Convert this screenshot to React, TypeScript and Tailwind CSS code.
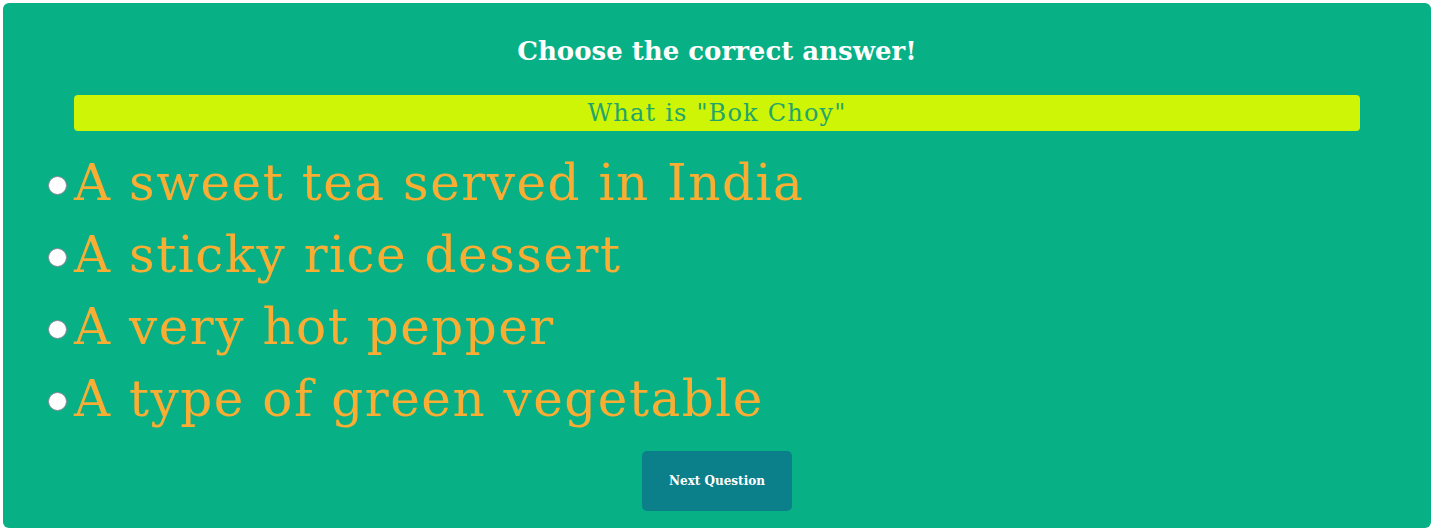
import React from "react";

const options = [
  "A sweet tea served in India",
  "A sticky rice dessert",
  "A very hot pepper",
  "A type of green vegetable",
];

export default function App() {
  return (
    <div className="w-[1434px] h-[532px] bg-white p-[3px]" style={{ fontFamily: '"DejaVu Serif", serif' }}>
      <div className="h-[525px] rounded-[6px] bg-[#08b086] flex flex-col">
        <h1 className="text-center text-white font-bold text-[26px] leading-[30px] mt-[33px] tracking-[0px]">
          Choose the correct answer!
        </h1>
        <div className="mx-[71px] mt-[29px] h-[36px] rounded-[4px] bg-[#cff506] flex items-center justify-center text-[24px] text-[#22a56c] tracking-[1.2px]">
          What is "Bok Choy"
        </div>
        <div className="flex flex-col mt-[16px] pl-[45px]">
          {options.map((o) => (
            <label key={o} className="flex items-center h-[72px]">
              <span className="w-[19px] h-[19px] rounded-full bg-white border border-[#8a8a9a] mr-[7px] mt-[4px]" />
              <span className="text-[#f9ad33] text-[50px] leading-[72px] tracking-[1.5px]">{o}</span>
            </label>
          ))}
        </div>
        <div className="flex justify-center mt-[16px]">
          <button className="w-[150px] h-[60px] rounded-[5px] bg-[#0b808a] text-white font-bold text-[12px]">
            Next Question
          </button>
        </div>
      </div>
    </div>
  );
}
